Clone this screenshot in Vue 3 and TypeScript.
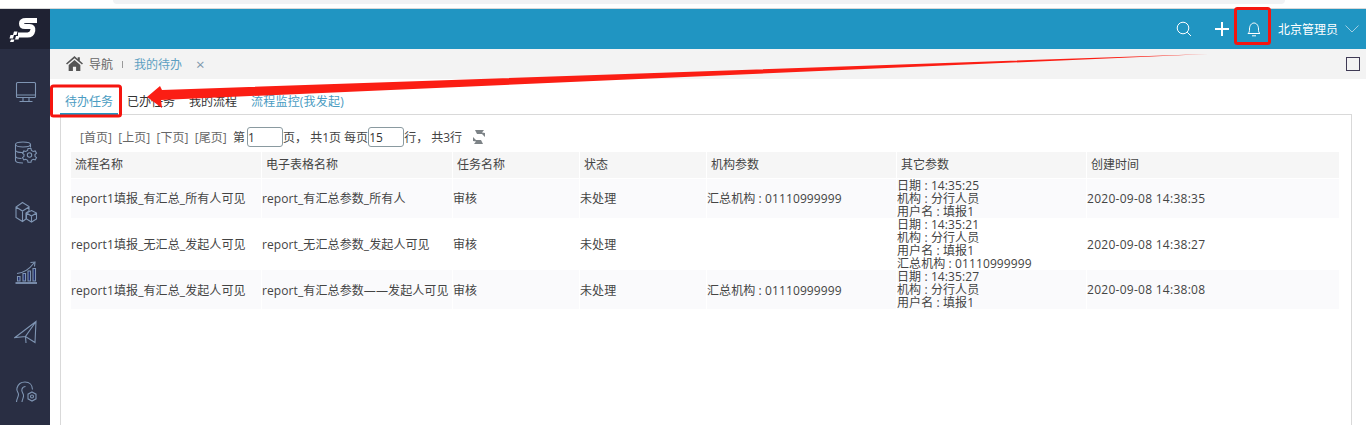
<script setup lang="ts">
interface Row { flow: string; sheet: string; task: string; state: string; org: string; params: string[]; time: string; h: number; shade: boolean }
const pager = ['[首页]', '[上页]', '[下页]', '[尾页]']
const headers = ['流程名称', '电子表格名称', '任务名称', '状态', '机构参数', '其它参数', '创建时间']
const rows: Row[] = [
  { flow: 'report1填报_有汇总_所有人可见', sheet: 'report_有汇总参数_所有人', task: '审核', state: '未处理', org: '汇总机构 : 01110999999', params: ['日期 : 14:35:25', '机构 : 分行人员', '用户名 : 填报1'], time: '2020-09-08 14:38:35', h: 40, shade: true },
  { flow: 'report1填报_无汇总_发起人可见', sheet: 'report_无汇总参数_发起人可见', task: '审核', state: '未处理', org: '', params: ['日期 : 14:35:21', '机构 : 分行人员', '用户名 : 填报1', '汇总机构 : 01110999999'], time: '2020-09-08 14:38:27', h: 52, shade: false },
  { flow: 'report1填报_有汇总_发起人可见', sheet: 'report_有汇总参数——发起人可见', task: '审核', state: '未处理', org: '汇总机构 : 01110999999', params: ['日期 : 14:35:27', '机构 : 分行人员', '用户名 : 填报1'], time: '2020-09-08 14:38:08', h: 39, shade: true },
]
</script>

<template>
  <div class="page">
    <div class="chrome"><div class="address"></div></div>
    <div class="frame">
      <aside class="side">
        <div class="logo">
          <svg width="50" height="40" viewBox="0 0 50 40">
            <path d="M37 11.500H26Q21.500 11.500 21.500 14.500Q21.500 17.500 25 17.500H29.500Q33.500 17.500 32.800 21.500Q32 26 27.500 26H18" fill="none" stroke="#fff" stroke-width="5" />
            <path d="M14 22.500h3.500l-1 3.500H13zM10.500 26h3.500l-1 3.500H9.500zM16 27h3.500l-1 3.500H15zM11 30.500h3.500l-1 2.500H10z" fill="#fff" />
          </svg>
        </div>
        <div class="side-icons">
          <svg class="ico" viewBox="0 0 24 24"><rect x="2.500" y="2.500" width="19" height="15" rx="1"/><path d="M2.500 15h19M9 18v3M15 18v3M5.500 21.500h13"/></svg>
          <svg class="ico" viewBox="0 0 24 24"><ellipse cx="9" cy="4.500" rx="7.500" ry="2.500"/><path d="M1.500 4.500v16c0 2 3 2.500 7.500 2.500M1.500 10c0 2 4 2.800 8 2.500M1.500 16c0 1.600 2.500 2.400 6 2.500M16.500 4.500v3"/><circle cx="15.500" cy="15" r="2.200"/><path d="M14 8.500h3l.4 2 1.800 1 2-.6 1.300 2.300-1.500 1.300v1.800l1.500 1.300-1.300 2.300-2-.6-1.800 1-.4 2h-3l-.4-2-1.800-1-2 .6-1.300-2.300 1.500-1.300v-1.800l-1.500-1.300 1.300-2.300 2 .6 1.800-1z"/></svg>
          <svg class="ico" viewBox="0 0 24 24"><path d="M8.500 2.500 15 6.500v4.500l-3 2v6l-3.500 2.500L2 17.500V7zM2 7l6.500 4 6.500-4M8.500 11v10.500"/><path d="M17.500 10.500 22.500 13v6l-5 3-5-3v-6zM12.500 13l5 3 5-3M17.500 16v6"/></svg>
          <svg class="ico" viewBox="0 0 24 24"><path d="M3 13.500c6-.5 12-4 17-10.500M16.500 2.500 21 2l-.5 4.500"/><path class="bar" d="M3.500 21v-4.500h2.500V21zM9 21v-7.500h2.500V21zM14 21v-10h2.500v10zM19 21V8.500h2.500V21z"/><path d="M1.500 23h21.500" stroke-width="1.800"/></svg>
          <svg class="ico" viewBox="0 0 24 24"><path d="M22 1.500 1 17.500l10.500-1L21 22.500zM22 1.500 11.500 16.500 12 23"/></svg>
          <svg class="ico" viewBox="0 0 24 24"><path d="M2.500 22c0-3 2-5 2-7.500S2 11.500 3 8c1-3.500 4-6 8-6 4.500 0 7.500 3 7.500 7.500M8 22c0-2.500 2-4.500 1.500-7S7 11.500 8 9c.7-1.800 2-2.500 3.500-2.500"/><path d="M18 12l4 2.200v4.600L18 21l-4-2.200v-4.600z"/><circle cx="18" cy="16.500" r="1.500"/></svg>
        </div>
      </aside>
      <div class="main">
        <header class="top">
          <svg class="t-search" width="16" height="16" viewBox="0 0 16 16"><circle cx="7" cy="7" r="5.800"/><path d="M11.200 11.200 15 15"/></svg>
          <svg class="t-plus" width="14" height="14" viewBox="0 0 14 14"><path d="M7 0v14M0 7h14"/></svg>
          <svg class="t-bell" width="14" height="15" viewBox="0 0 14 15"><path d="M1 11.500c1.300-1 1.500-2 1.500-4.500C2.500 3.500 4.500 1 7 1s4.500 2.500 4.500 6c0 2.500.2 3.500 1.500 4.500zM5 13.800h4"/></svg>
          <span class="user">北京管理员</span>
          <svg class="t-chev" width="14" height="8" viewBox="0 0 14 8"><path d="M.5.500 7 7 13.500.500"/></svg>
        </header>
        <nav class="crumb">
          <svg width="17" height="15" viewBox="0 0 16 14"><path d="M8 0 0 7l1 1 7-6 7 6 1-1-3-2.600V1h-2v1.700zM2.500 8.500 8 3.800l5.500 4.700V14H9.500v-4h-3v4h-4z" fill="#555"/></svg>
          <span class="nav-home">导航</span>
          <i class="sep"></i>
          <span class="nav-cur">我的待办</span>
          <span class="nav-x">×</span>
          <span class="nav-box"></span>
        </nav>
        <div class="tabs">
          <span class="tab active">待办任务</span>
          <span class="tab">已办任务</span>
          <span class="tab">我的流程</span>
          <span class="tab link">流程监控(我发起)</span>
        </div>
        <section class="panel">
          <div class="pager">
            <span v-for="p in pager" :key="p" class="pg">{{ p }}</span>
            <span class="pg-t first">第</span><input class="pg-in one" value="1" />
            <span class="pg-t">页，&nbsp;共1页 每页</span><input class="pg-in" value="15" />
            <span class="pg-t">行，&nbsp;共3行</span>
            <svg class="refresh" width="14" height="16" viewBox="0 0 14 16"><path d="M3 1h9l-2 2.500 3 .5v4l-3-3H5zM11 15H2l2-2.500-3-.5V8l3 3h5z" fill="#7d8387"/></svg>
          </div>
          <div class="grid head">
            <div v-for="h in headers" :key="h" class="hc">{{ h }}</div>
          </div>
          <div v-for="r in rows" :key="r.time" class="grid row" :class="{ shade: r.shade }" :style="{ height: r.h + 'px' }">
            <div class="c">{{ r.flow }}</div>
            <div class="c">{{ r.sheet }}</div>
            <div class="c">{{ r.task }}</div>
            <div class="c">{{ r.state }}</div>
            <div class="c">{{ r.org }}</div>
            <div class="c params"><div v-for="p in r.params" :key="p">{{ p }}</div></div>
            <div class="c time">{{ r.time }}</div>
          </div>
        </section>
      </div>
    </div>
    <svg class="marks" width="1366" height="425" viewBox="0 0 1366 425">
      <rect x="51.500" y="86" width="69" height="30" rx="2" class="mark" />
      <rect x="1235.500" y="8.500" width="34" height="35" rx="2" class="mark" />
      <path d="M1208 54 162 90 160 86 147 97 162 108 161 100 Z" fill="#fb1e14" />
    </svg>
  </div>
</template>

<style>
html, body { margin: 0; padding: 0; background: #fff; overflow: hidden; }
</style>

<style scoped>
.page { position: relative; width: 1366px; height: 425px; overflow: hidden; font: 12px "Open Sans", "Noto Sans CJK SC", sans-serif; color: #444; background: #fff; }
.chrome { height: 9px; box-sizing: border-box; border-bottom: 1px solid #d8d8d8; }
.address { margin-left: 113px; width: 1172px; height: 4px; background: #f1f2f4; border-radius: 0 0 8px 8px; }
.frame { display: flex; height: 416px; }
.side { width: 50px; background: #292e43; flex: none; }
.logo { height: 40px; background: #1f2233; display: flex; }
.side-icons { display: flex; flex-direction: column; align-items: center; padding-top: 31px; gap: 36px; margin-left: 1px; }
.ico { width: 24px; height: 24px; fill: none; stroke: #7f95b3; stroke-width: 1.100; }
.ico .bar { fill: #1d2a6b; }
.main { flex: 1; min-width: 0; }
.top { height: 40px; background: #2095c2; display: flex; align-items: center; color: #fff; }
.top svg { fill: none; stroke: #fff; flex: none; }
.t-search { margin-left: auto; stroke-width: 1; }
.t-plus { margin-left: 23px; stroke-width: 2; }
.t-bell { margin-left: 18px; stroke-width: 1; }
.user { margin-left: 17px; }
.top .t-chev { margin-left: 7px; margin-right: 7px; stroke: #9fcde2; }
.crumb { height: 30px; background: #f3f3f3; display: flex; align-items: center; padding-left: 16px; position: relative; color: #666; }
.crumb svg { margin-top: -2px; }
.nav-home { margin-left: 6px; margin-top: -1px; }
.sep { width: 1px; height: 7px; background: #999; margin: 0 11px 0 9px; }
.nav-cur { color: #5c9fc2; margin-top: -1px; }
.nav-x { margin-left: 14px; font-size: 15px; color: #7e97ab; line-height: 1; }
.nav-box { margin-left: auto; margin-right: 6px; width: 12px; height: 12px; border: 1px solid #3f3a55; background: #f3f3f3; }
.tabs { height: 36px; box-sizing: border-box; display: flex; padding: 14px 0 0 10px; gap: 0; }
.tab { padding: 0 5px; height: 21px; color: #333; margin-right: 4px; box-sizing: border-box; line-height: 18px; white-space: nowrap; }
.tab.active { color: #4a9cc2; border-bottom: 2px solid #2095c2; height: 22px; }
.tab.link { color: #4a9cc2; letter-spacing: .2px; }
.panel { margin: -1px 14px 0 10px; border: 1px solid #d9d9d9; border-bottom: 0; height: 320px; padding: 11px 10px 0; box-sizing: border-box; }
.pager { height: 22px; display: flex; align-items: center; padding-left: 9px; margin-bottom: 4px; white-space: nowrap; }
.pg { margin-right: 6.400px; color: #666; }
.pg-t { color: #444; }
.pg-in { width: 36px; height: 20px; box-sizing: border-box; border: 1px solid #8a9aa0; border-radius: 3px; padding: 0; font: 12px "Open Sans", sans-serif; color: #333; outline: 0; }
.pg-in.one { margin-left: 2px; }
.refresh { margin-left: 10px; }
.grid { display: grid; grid-template-columns: 191px 191px 127px 127px 190px 190px 253px; width: 1269px; }
.head { height: 26px; background: #f6f6f6; }
.hc { padding-left: 4px; line-height: 26px; border-right: 1px solid #fff; border-bottom: 1px solid #fff; }
.row.shade { background: #fafafc; }
.c { display: flex; flex-direction: column; justify-content: center; border-right: 1px solid #fff; white-space: nowrap; overflow: visible; letter-spacing: .1px; }
.time { letter-spacing: .27px; }
.params { line-height: 13px; }
.marks { position: absolute; left: 0; top: 0; pointer-events: none; }
.mark { fill: none; stroke: #f5150f; stroke-width: 3; }
</style>
